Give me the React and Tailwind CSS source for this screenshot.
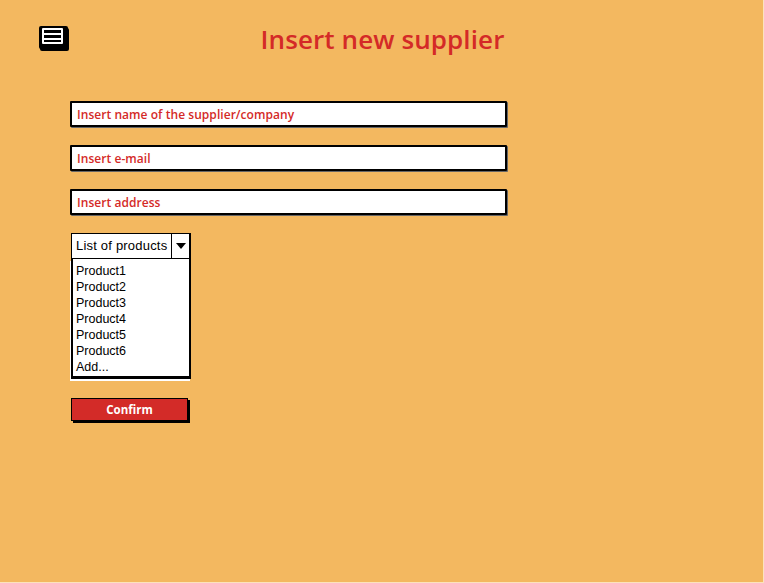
export default function App() {
  const hand = { fontFamily: '"Open Sans", "Noto Sans", sans-serif' };
  const arial = { fontFamily: '"Liberation Sans", Arial, sans-serif' };
  const fields = ["Insert name of the supplier/company", "Insert e-mail", "Insert address"];
  const products = ["Product1", "Product2", "Product3", "Product4", "Product5", "Product6", "Add..."];
  return (
    <div className="w-[764px] h-[583px] bg-[#f3b860] border-r border-b border-[#fbe3bd] flex flex-col">
      <div className="grid grid-cols-[1fr_auto_1fr] items-start pt-[20px]">
        <div className="pl-[39px] pt-[6px]">
          <div className="w-[29px] h-[23px] bg-black rounded-[2px] shadow-[1px_2px_0_#000] flex items-start pl-[3px] pt-[2px]">
            <div className="w-[21px] h-[16px] border-2 border-white rounded-[1px] flex flex-col justify-center gap-[3px]">
              <div className="h-[2px] bg-white"></div>
              <div className="h-[2px] bg-white"></div>
            </div>
          </div>
        </div>
        <h1 className="text-[26px] leading-[36px] pt-[1px] pl-[2px] text-[#d42a27] font-semibold tracking-[0.1px]" style={hand}>
          Insert new supplier
        </h1>
        <div></div>
      </div>

      <div className="pl-[70px] pt-[44px] flex flex-col gap-[18px]">
        {fields.map((f) => (
          <div key={f} className="w-[437px] h-[26px] bg-white border-2 border-black rounded-[1px] shadow-[1px_1px_0_#666] flex items-center pl-[5px] pt-[1px]">
            <span className="text-[12px] text-[#d42a27] font-semibold tracking-[0.05px]" style={hand}>{f}</span>
          </div>
        ))}

        <div className="w-[120px] flex flex-col ml-[1px]" style={arial}>
          <div className="flex h-[26px]">
            <div className="flex-1 bg-white border border-black flex items-center pl-[4px] text-[13px] tracking-[0.2px] text-black">
              List of products
            </div>
            <div className="w-[19px] bg-white border border-l-0 border-black border-r-2 flex items-center justify-center">
              <svg width="10" height="6" viewBox="0 0 10 6"><path d="M0 0h10L5 6z" fill="#000" /></svg>
            </div>
          </div>
          <div className="h-[120px] bg-white border-[2px] border-b-[3px] border-black border-t-0 shadow-[-1px_2px_0_#fff] pl-[3px] pt-[4px] flex flex-col">
            {products.map((p) => (
              <div key={p} className="text-[12.5px] leading-[16px] text-black">{p}</div>
            ))}
          </div>
        </div>

        <div className="mt-[1px] ml-[1px] w-[117px] h-[23px] bg-[#d32b28] border border-black shadow-[2px_2px_0_#000] flex items-center justify-center">
          <span className="text-white text-[11.5px] font-bold" style={hand}>Confirm</span>
        </div>
      </div>
    </div>
  );
}
